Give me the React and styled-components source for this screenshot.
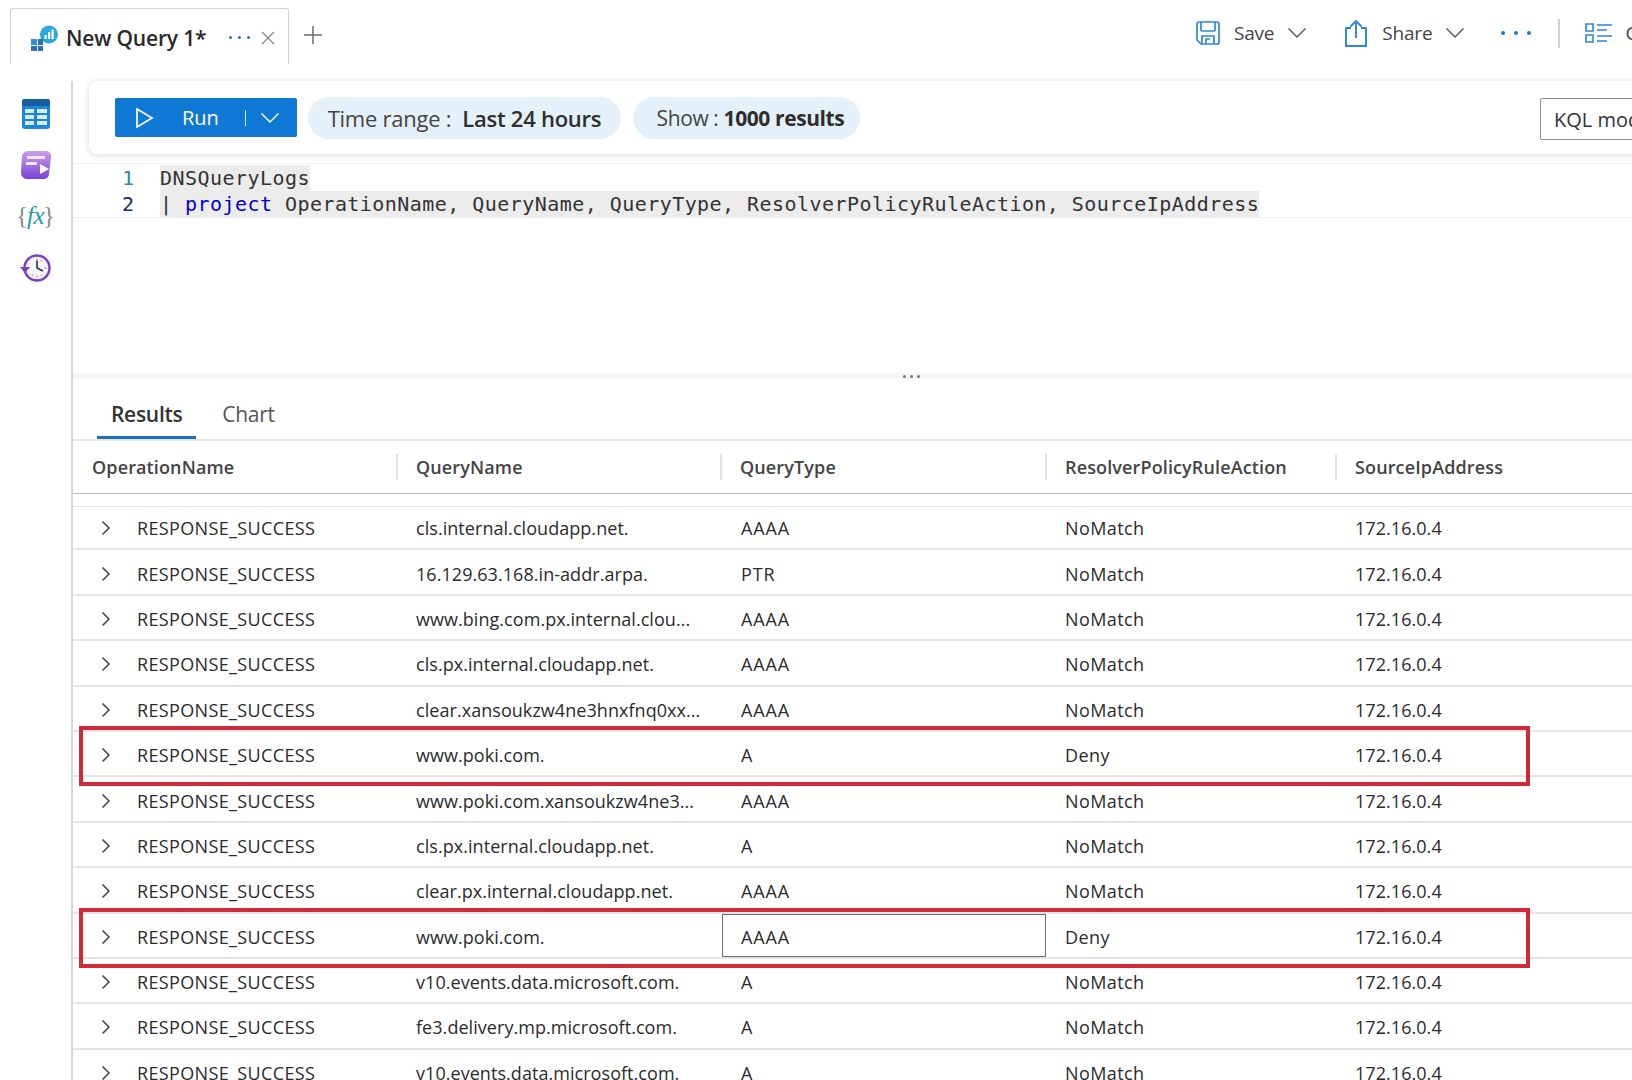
import React from 'react'
import styled, { createGlobalStyle } from 'styled-components'

const rows = [
  ['cls.internal.cloudapp.net.', 'AAAA', 'NoMatch'],
  ['16.129.63.168.in-addr.arpa.', 'PTR', 'NoMatch'],
  ['www.bing.com.px.internal.clou...', 'AAAA', 'NoMatch'],
  ['cls.px.internal.cloudapp.net.', 'AAAA', 'NoMatch'],
  ['clear.xansoukzw4ne3hnxfnq0xx...', 'AAAA', 'NoMatch'],
  ['www.poki.com.', 'A', 'Deny', 'flag'],
  ['www.poki.com.xansoukzw4ne3...', 'AAAA', 'NoMatch'],
  ['cls.px.internal.cloudapp.net.', 'A', 'NoMatch'],
  ['clear.px.internal.cloudapp.net.', 'AAAA', 'NoMatch'],
  ['www.poki.com.', 'AAAA', 'Deny', 'selected'],
  ['v10.events.data.microsoft.com.', 'A', 'NoMatch'],
  ['fe3.delivery.mp.microsoft.com.', 'A', 'NoMatch'],
  ['v10.events.data.microsoft.com.', 'A', 'NoMatch'],
]

const columns = ['OperationName', 'QueryName', 'QueryType', 'ResolverPolicyRuleAction', 'SourceIpAddress']

const Chevron = ({ size = 20, color = '#5c5c5c' }) => (
  <svg width={size} height={size * 0.6} viewBox="0 0 20 12" fill="none" stroke={color} strokeWidth="1.5">
    <path d="M1.5 1.5 10 10l8.5-8.5" />
  </svg>
)

const App = () => (
  <Page>
    <GlobalStyle />
    <TopBar>
      <Tab>
        <svg width="28" height="26" viewBox="0 0 28 26">
          <circle cx="19" cy="9.5" r="9" fill="#29a9dc" />
          <path d="M13 16l-3 4 .5-7z" fill="#29a9dc" />
          <path d="M14.5 10h2.2v4h-2.2zM18 7h2.2v7H18zM21.5 4.500h2.200V14h-2.200z" fill="#fff" />
          <path d="M1 14h6v6H1z" fill="#2f8fd4" />
          <path d="M8 14h5v6H8zM1 21h6v5H1zM8 21h5v5H8z" fill="#2673b4" />
        </svg>
        <TabTitle>New Query 1*</TabTitle>
        <TabDots>
          <i /><i /><i />
        </TabDots>
        <svg width="14" height="14" viewBox="0 0 14 14" stroke="#8a8a8a" strokeWidth="1.4">
          <path d="M1 1l12 12M13 1 1 13" />
        </svg>
      </Tab>
      <PlusButton>
        <svg width="20" height="20" viewBox="0 0 20 20" stroke="#6b6b6b" strokeWidth="1.5">
          <path d="M10 1v18M1 10h18" />
        </svg>
      </PlusButton>
      <Actions>
        <Action>
          <svg width="24" height="24" viewBox="0 0 24 24" fill="none" stroke="#2b88d8" strokeWidth="1.7">
            <path d="M1 3a2 2 0 0 1 2-2h18a2 2 0 0 1 2 2v18a2 2 0 0 1-2 2H5l-4-4z" />
            <path d="M5 1v8a1 1 0 0 0 1 1h12a1 1 0 0 0 1-1V1M6 23v-8h12v8M10 23v-5h4" />
          </svg>
          <ActionLabel>Save</ActionLabel>
          <Chevron />
        </Action>
        <Action $gap={37}>
          <svg width="24" height="28" viewBox="0 0 24 28" fill="none" stroke="#2b88d8" strokeWidth="1.9">
            <path d="M7 9H2v18h20V9h-5M12 19V2M6.5 7.5 12 2l5.500 5.500" />
          </svg>
          <ActionLabel>Share</ActionLabel>
          <Chevron />
        </Action>
        <MoreDots>
          <i /><i /><i />
        </MoreDots>
        <ActionDivider />
        <ColumnsIcon width="27" height="20" viewBox="0 0 27 20" fill="none" stroke="#2b88d8" strokeWidth="1.6">
          <path d="M1 1h7v7H1zM1 12h7v7H1zM12 2h15M12 7h10M12 13h15M12 18h10" />
        </ColumnsIcon>
        <ClippedLabel>Columns</ClippedLabel>
      </Actions>
    </TopBar>

    <Body>
      <Sidebar>
        <svg width="28" height="30" viewBox="0 0 28 30">
          <rect width="28" height="30" rx="3" fill="#1b87d8" />
          <path d="M0 3a3 3 0 0 1 3-3h22a3 3 0 0 1 3 3v4H0z" fill="#175c9c" />
          <path d="M3 10h9v4H3zM15 10h10v4H15zM3 16h9v4H3zM15 16h10v4H15zM3 22h9v4H3zM15 22h10v4H15z" fill="#d4ecfb" />
        </svg>
        <svg width="32" height="30" viewBox="0 0 32 30">
          <defs>
            <linearGradient id="queryFill" x1="0" y1="0" x2="0" y2="1">
              <stop offset="0" stopColor="#c9a0ec" />
              <stop offset="1" stopColor="#7b3fd4" />
            </linearGradient>
          </defs>
          <path d="M8 1h18a5 5 0 0 1 5 6l-2 17a5 5 0 0 1-5 5H7a6 6 0 0 1-6-6L2 7a6 6 0 0 1 6-6z" fill="url(#queryFill)" />
          <path d="M7 6h18v3H7zM6 12h11v3H6z" fill="#f3e6fb" />
          <path d="M20 14l9 5-9 5z" fill="#fff" />
        </svg>
        <FxIcon>
          <FxBrace>{'{'}</FxBrace>
          <FxText>fx</FxText>
          <FxBrace>{'}'}</FxBrace>
        </FxIcon>
        <ClockIcon width="32" height="30" viewBox="0 0 32 30" fill="none">
          <circle cx="17" cy="15" r="12.500" stroke="#7b3fc4" strokeWidth="2.400" fill="#f6f4fa" />
          <path d="M17 5.500v2M17 22.500v2M26.500 15h-2M9.500 15h-2M22 7l-1 1.500M22 23l-1-1.500M12 23l1-1.500" stroke="#8a8a8a" strokeWidth="1" />
          <path d="M17 7.500V15l6 3" stroke="#333" strokeWidth="1.600" />
          <path d="M0 14h10l-5 6z" fill="#7b3fc4" />
        </ClockIcon>
      </Sidebar>

      <Main>
        <QueryBar>
          <RunButton>
            <svg width="20" height="22" viewBox="0 0 20 22" fill="none" stroke="#fff" strokeWidth="1.7">
              <path d="M2 2l15 9-15 9z" />
            </svg>
            <RunLabel>Run</RunLabel>
            <RunDivider />
            <Chevron color="#fff" />
          </RunButton>
          <TimePill>
            Time range :&nbsp;&nbsp;<strong>Last 24 hours</strong>
          </TimePill>
          <ShowPill>
            Show :&nbsp;<strong>1000 results</strong>
          </ShowPill>
          <ModeButton>KQL mode</ModeButton>
        </QueryBar>

        <Editor>
          <CodeBlock>
            <CodeLine>
              <LineNumber $color="#2b8a9e">1</LineNumber>
              <Code>DNSQueryLogs</Code>
            </CodeLine>
            <CodeLine>
              <LineNumber $color="#1a2a66">2</LineNumber>
              <Code>
                | <Keyword>project</Keyword> OperationName, QueryName, QueryType, ResolverPolicyRuleAction, SourceIpAddress
              </Code>
            </CodeLine>
          </CodeBlock>
        </Editor>

        <Splitter>
          <SplitterDots>
            <i /><i /><i />
          </SplitterDots>
        </Splitter>

        <ResultTabs>
          <ResultTab $active>Results</ResultTab>
          <ResultTab>Chart</ResultTab>
        </ResultTabs>

        <HeaderRow>
          {columns.map((c) => (
            <HeaderCell key={c}>{c}</HeaderCell>
          ))}
        </HeaderRow>

        {rows.map(([name, type, action, mark], i) => (
          <Row key={i}>
            <NameCell>
              <svg width="10" height="16" viewBox="0 0 10 16" fill="none" stroke="#444" strokeWidth="1.5">
                <path d="M1.500 1.500 8 8l-6.500 6.500" />
              </svg>
              RESPONSE_SUCCESS
            </NameCell>
            <Cell>{name}</Cell>
            <TypeCell $selected={mark === 'selected'}>{type}</TypeCell>
            <ActionCell>{action}</ActionCell>
            <Cell>172.16.0.4</Cell>
            {mark && <RedFrame />}
          </Row>
        ))}
      </Main>
    </Body>
  </Page>
)

export default App

const GlobalStyle = createGlobalStyle`
  html, body {
    margin: 0;
    background: #fff;
  }
  body {
    font-family: "Open Sans", "Noto Sans", sans-serif;
    color: #2b2b2b;
  }
`

const Page = styled.div`
  width: 1632px;
  height: 1080px;
  overflow: hidden;
  display: flex;
  flex-direction: column;
  background: #fff;
`

const TopBar = styled.div`
  height: 81px;
  flex: none;
  display: flex;
  align-items: flex-start;
  padding: 8px 0 0 10px;
  box-sizing: border-box;
`

const Tab = styled.div`
  width: 279px;
  height: 56px;
  box-sizing: border-box;
  border: 1px solid #d2d2d2;
  border-bottom: none;
  border-radius: 3px 3px 0 0;
  display: flex;
  align-items: center;
  padding: 2px 13px 0 19px;
`

const TabTitle = styled.span`
  font-size: 21px;
  font-weight: 600;
  letter-spacing: -0.17px;
  margin-left: 8px;
  color: #2a2a2a;
  white-space: nowrap;
`

const TabDots = styled.span`
  display: flex;
  gap: 6px;
  margin: 0 11px 0 auto;
  i {
    width: 3px;
    height: 3px;
    border-radius: 50%;
    background: #1f78c8;
  }
`

const PlusButton = styled.div`
  display: flex;
  margin: 17px 0 0 14px;
`

const Actions = styled.div`
  width: 436px;
  margin-left: auto;
  display: flex;
  align-items: center;
  height: 50px;
  overflow: hidden;
  flex: none;
  & > * {
    flex: none;
  }
`

const Action = styled.div`
  display: flex;
  align-items: center;
  margin-left: ${(p) => p.$gap || 0}px;
`

const ActionLabel = styled.span`
  font-size: 19px;
  letter-spacing: -0.2px;
  margin: 0 13px 0 14px;
  color: #444;
`

const MoreDots = styled.span`
  display: flex;
  gap: 9px;
  margin-left: 36px;
  i {
    width: 4px;
    height: 4px;
    border-radius: 50%;
    background: #1f78c8;
  }
`

const ActionDivider = styled.span`
  width: 2px;
  height: 29px;
  background: #d0d0d0;
  margin: 0 25px 0 27px;
`

const ColumnsIcon = styled.svg`
  display: block;
`

const ClippedLabel = styled.span`
  font-size: 19px;
  margin-left: 13px;
  color: #444;
`

const Body = styled.div`
  flex: 1;
  display: flex;
  min-height: 0;
`

const Sidebar = styled.div`
  width: 71px;
  flex: none;
  box-sizing: content-box;
  border-right: 2px solid #d6d6d6;
  display: flex;
  flex-direction: column;
  align-items: center;
  gap: 21px;
  padding-top: 18px;
`

const ClockIcon = styled.svg`
  margin-top: 1px;
`

const FxIcon = styled.div`
  height: 30px;
  display: flex;
  align-items: center;
  font-family: "Liberation Serif", serif;
  font-style: italic;
`

const FxBrace = styled.span`
  font-size: 25px;
  color: #8a8a8a;
  font-style: normal;
  font-weight: 400;
  margin: 0 -1px;
`

const FxText = styled.span`
  font-size: 25px;
  color: #1e9c9c;
  letter-spacing: -0.5px;
`

const Main = styled.div`
  flex: 1;
  min-width: 0;
  display: flex;
  flex-direction: column;
`

const QueryBar = styled.div`
  height: 73px;
  flex: none;
  margin: 0 -22px 0 16px;
  padding: 0 2px 0 26px;
  box-sizing: border-box;
  border-radius: 8px;
  background: #fff;
  box-shadow: 0 1px 7px rgba(0, 0, 0, 0.16);
  display: flex;
  align-items: center;
  position: relative;
`

const RunButton = styled.div`
  width: 182px;
  height: 39px;
  box-sizing: border-box;
  background: #0f78d4;
  border-radius: 2px;
  display: flex;
  align-items: center;
  padding: 0 17px 0 20px;
  color: #fff;
`

const RunLabel = styled.span`
  font-size: 20px;
  margin-left: 27px;
`

const RunDivider = styled.span`
  width: 1px;
  height: 16px;
  background: #d8ecfa;
  margin: 0 14px 0 auto;
`

const TimePill = styled.div`
  width: 313px;
  height: 42px;
  box-sizing: border-box;
  margin-left: 11px;
  border-radius: 21px;
  background: #e4f0fa;
  display: flex;
  align-items: center;
  justify-content: center;
  font-size: 22px;
  letter-spacing: -0.25px;
  color: #444;
  white-space: nowrap;
  strong {
    font-weight: 600;
    color: #2e2e2e;
  }
`

const ShowPill = styled(TimePill)`
  width: 227px;
  margin-left: 12px;
  padding-left: 8px;
  font-size: 21px;
  letter-spacing: -0.4px;
  strong {
    font-weight: 700;
  }
`

const ModeButton = styled.div`
  margin: 3px 0 0 auto;
  width: 112px;
  height: 42px;
  box-sizing: border-box;
  border: 1px solid #8f8f8f;
  border-radius: 2px;
  padding-left: 13px;
  display: flex;
  align-items: center;
  font-size: 20px;
  white-space: nowrap;
  overflow: hidden;
  color: #333;
`

const Editor = styled.div`
  height: 219px;
  flex: none;
  padding-top: 9px;
  box-sizing: border-box;
`

const CodeBlock = styled.div`
  border-top: 1px solid #f3f3f3;
  border-bottom: 1px solid #f0f0f0;
  padding-top: 1px;
`

const CodeLine = styled.div`
  display: flex;
  height: 26px;
`

const LineNumber = styled.span`
  width: 87px;
  flex: none;
  padding-right: 26px;
  box-sizing: border-box;
  text-align: right;
  color: ${(p) => p.$color};
  font: 20px/26px "DejaVu Sans Mono", monospace;
`

const Code = styled.span`
  background: #ececec;
  font: 20px/26px "DejaVu Sans Mono", monospace;
  letter-spacing: 0.45px;
  white-space: pre;
  color: #333;
`

const Keyword = styled.span`
  color: #0000d0;
`

const Splitter = styled.div`
  height: 6px;
  flex: none;
  background: #f5f5f5;
  position: relative;
`

const SplitterDots = styled.span`
  position: absolute;
  top: 2px;
  left: 830px;
  display: flex;
  gap: 4px;
  i {
    width: 3px;
    height: 3px;
    border-radius: 50%;
    background: #777;
  }
`

const ResultTabs = styled.div`
  height: 62px;
  flex: none;
  box-sizing: border-box;
  border-bottom: 2px solid #e6e6e6;
  display: flex;
  align-items: flex-end;
  padding-left: 24px;
  gap: 26px;
`

const ResultTab = styled.div`
  height: 48px;
  box-sizing: border-box;
  padding: 9px ${(p) => (p.$active ? 14 : 0)}px 0;
  font-size: 21px;
  font-weight: ${(p) => (p.$active ? 600 : 400)};
  letter-spacing: -0.3px;
  color: ${(p) => (p.$active ? '#333' : '#555')};
  border-bottom: 3px solid ${(p) => (p.$active ? '#1a74bd' : 'transparent')};
`

const HeaderRow = styled.div`
  height: 53px;
  flex: none;
  box-sizing: border-box;
  border-bottom: 1px solid #bdbdbd;
  display: grid;
  grid-template-columns: 324px 324px 325px 290px 1fr;
  align-items: center;
  margin-bottom: 11px;
  box-shadow: 0 12px 0 #fff, 0 13px 0 #e2e2e2;
`

const HeaderCell = styled.div`
  height: 26px;
  line-height: 26px;
  padding-left: 18px;
  margin-left: -1px;
  font-size: 18px;
  font-weight: 600;
  letter-spacing: 0.13px;
  color: #444;
  border-left: 2px solid #e2e2e2;
  &:first-child {
    border-left: none;
    margin-left: 0;
    padding-left: 19px;
  }
`

const Row = styled.div`
  height: 45.4px;
  flex: none;
  box-sizing: border-box;
  border-bottom: 2px solid #e4e4e4;
  display: grid;
  grid-template-columns: 324px 324px 325px 290px 1fr;
  align-items: center;
  position: relative;
`

const Cell = styled.div`
  height: 100%;
  box-sizing: border-box;
  display: flex;
  align-items: center;
  padding: 3px 0 0 19px;
  font-size: 18px;
  letter-spacing: 0.05px;
  color: #2b2b2b;
  white-space: nowrap;
`

const NameCell = styled(Cell)`
  padding-left: 28px;
  gap: 26px;
  letter-spacing: 0.36px;
`

const TypeCell = styled(Cell)`
  padding-left: 20px;
  letter-spacing: 0.9px;
  ${(p) => p.$selected && `
    border: 1.5px solid #6f6f6f;
    margin-left: 1px;
    padding-left: 18px;
  `}
`

const ActionCell = styled(Cell)`
  letter-spacing: 0.4px;
`

const RedFrame = styled.div`
  position: absolute;
  left: 6px;
  top: -6px;
  width: 1451px;
  height: 60px;
  box-sizing: border-box;
  border: 4px solid #cf2a36;
  pointer-events: none;
`
